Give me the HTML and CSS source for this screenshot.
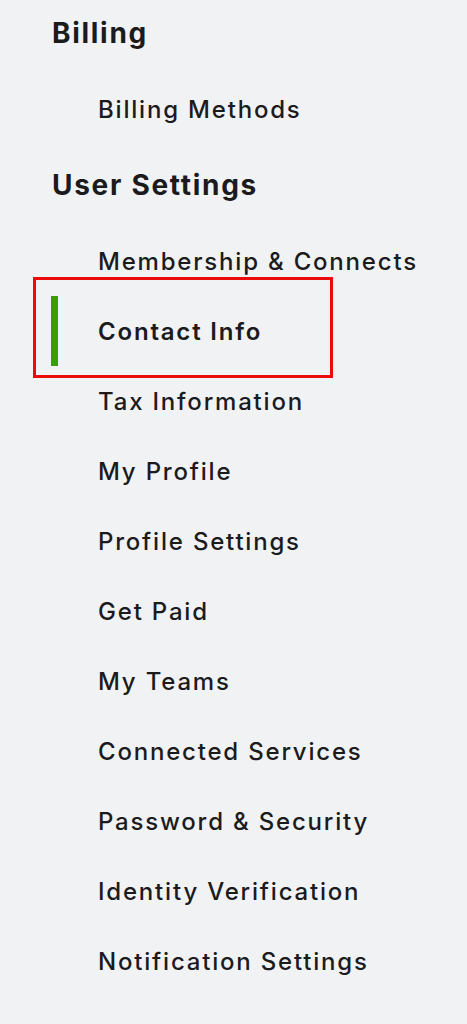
FILE: index.html
```
<!DOCTYPE html>
<html lang="en">
<head>
<meta charset="utf-8">
<title>Settings</title>
<link rel="stylesheet" href="styles.css">
</head>
<body>
<nav class="nav">
  <section class="group">
    <h2 class="group-title">Billing</h2>
    <ul class="items">
      <li class="item">Billing Methods</li>
    </ul>
  </section>
  <section class="group">
    <h2 class="group-title">User Settings</h2>
    <ul class="items">
      <li class="item">Membership &amp; Connects</li>
      <li class="item active">Contact Info<span class="highlight"></span></li>
      <li class="item">Tax Information</li>
      <li class="item">My Profile</li>
      <li class="item">Profile Settings</li>
      <li class="item">Get Paid</li>
      <li class="item">My Teams</li>
      <li class="item">Connected Services</li>
      <li class="item">Password &amp; Security</li>
      <li class="item">Identity Verification</li>
      <li class="item">Notification Settings</li>
    </ul>
  </section>
</nav>
</body>
</html>
```
FILE: styles.css
```
html, body {
  margin: 0;
  padding: 0;
  background: #f1f2f4;
}
body {
  color: #1b1b1d;
  font-family: "Inter", "Noto Sans", sans-serif;
  overflow: hidden;
}
.nav {
  margin-top: -8px;
  padding-left: 51px;
}
.group-title {
  margin: 0;
  height: 82px;
  display: flex;
  align-items: center;
  padding-left: 1px;
  font-size: 28px;
  font-weight: 700;
  letter-spacing: 1.7px;
}
.items {
  list-style: none;
  margin: 0;
  padding: 0;
}
.item {
  position: relative;
  height: 70px;
  display: flex;
  align-items: center;
  border-left: 7px solid transparent;
  padding-left: 40px;
  font-size: 24px;
  font-weight: 500;
  letter-spacing: 1.8px;
  white-space: nowrap;
}
.item.active {
  border-left-color: #37a000;
  font-weight: 600;
}
.highlight {
  position: absolute;
  left: -25px;
  top: -19px;
  width: 294px;
  height: 95px;
  border: 3px solid #ec0b0b;
}
```
